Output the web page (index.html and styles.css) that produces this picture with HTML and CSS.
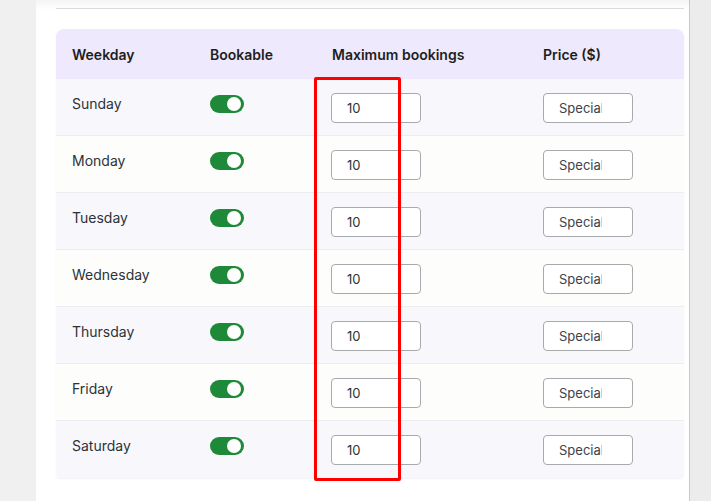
FILE: index.html
```html
<!DOCTYPE html>
<html>
<head>
<meta charset="utf-8">
<link rel="stylesheet" href="styles.css">
</head>
<body>
<div class="page">
  <div class="gutter"></div>
  <main class="panel">
    <div class="rule"></div>
    <div class="table-wrap">
      <div class="table">
        <div class="row head">
          <div class="cell">Weekday</div>
          <div class="cell">Bookable</div>
          <div class="cell">Maximum bookings</div>
          <div class="cell">Price ($)</div>
        </div>
        <div class="row odd">
          <div class="cell">Sunday</div>
          <div class="cell"><span class="toggle"><span class="knob"></span></span></div>
          <div class="cell"><input class="field" value="10"></div>
          <div class="cell"><input class="field price" value="Special"></div>
        </div>
        <div class="row even">
          <div class="cell">Monday</div>
          <div class="cell"><span class="toggle"><span class="knob"></span></span></div>
          <div class="cell"><input class="field" value="10"></div>
          <div class="cell"><input class="field price" value="Special"></div>
        </div>
        <div class="row odd">
          <div class="cell">Tuesday</div>
          <div class="cell"><span class="toggle"><span class="knob"></span></span></div>
          <div class="cell"><input class="field" value="10"></div>
          <div class="cell"><input class="field price" value="Special"></div>
        </div>
        <div class="row even">
          <div class="cell">Wednesday</div>
          <div class="cell"><span class="toggle"><span class="knob"></span></span></div>
          <div class="cell"><input class="field" value="10"></div>
          <div class="cell"><input class="field price" value="Special"></div>
        </div>
        <div class="row odd">
          <div class="cell">Thursday</div>
          <div class="cell"><span class="toggle"><span class="knob"></span></span></div>
          <div class="cell"><input class="field" value="10"></div>
          <div class="cell"><input class="field price" value="Special"></div>
        </div>
        <div class="row even">
          <div class="cell">Friday</div>
          <div class="cell"><span class="toggle"><span class="knob"></span></span></div>
          <div class="cell"><input class="field" value="10"></div>
          <div class="cell"><input class="field price" value="Special"></div>
        </div>
        <div class="row odd last">
          <div class="cell">Saturday</div>
          <div class="cell"><span class="toggle"><span class="knob"></span></span></div>
          <div class="cell"><input class="field" value="10"></div>
          <div class="cell"><input class="field price" value="Special"></div>
        </div>
      </div>
      <div class="highlight"></div>
    </div>
  </main>
  <div class="side"></div>
</div>
</body>
</html>
```
FILE: styles.css
```css
html, body {
  margin: 0;
  padding: 0;
  height: 100%;
}
body {
  font-family: Inter, "Noto Sans", "Liberation Sans", sans-serif;
  font-size: 14px;
  color: #2c3338;
  background: #f0f0f1;
  overflow: hidden;
}
.page {
  display: flex;
  height: 501px;
}
.gutter {
  width: 36px;
  flex: none;
  background: #f0f0f1;
}
.panel {
  width: 654px;
  flex: none;
  box-sizing: border-box;
  background: linear-gradient(#f4f4f4 0, #ffffff 10px);
  padding: 8px 5px 0 20px;
  border-right: 1px solid #c9c9c9;
}
.side {
  flex: 1;
  background: #ececec;
}
.rule {
  height: 1px;
  background: #dcdcde;
  margin-bottom: 20px;
}
.table-wrap {
  position: relative;
}
.table {
  border-radius: 8px 8px 4px 4px;
  overflow: hidden;
  box-shadow: 0 1px 2px rgba(0, 0, 0, 0.06);
}
.row {
  display: grid;
  grid-template-columns: 138px 122px 211px 1fr;
  height: 57px;
  border-bottom: 1px solid #ededf0;
  box-sizing: border-box;
}
.row.head {
  height: 50px;
  background: #eee9fd;
  border-bottom: none;
  align-items: center;
  padding-top: 2px;
  font-weight: 600;
  color: #1e1e1e;
}
.row.odd { background: #f8f8fc; }
.row.even { background: #fdfdfb; }
.row.last { border-bottom: none; }
.cell {
  padding-left: 16px;
  line-height: 20px;
}
.row:not(.head) .cell {
  padding-top: 14px;
}
.row:not(.head) .cell:first-child {
  padding-top: 15px;
}
.row:not(.head) .cell:nth-child(3) {
  padding-left: 15px;
}
.toggle {
  display: flex;
  justify-content: flex-end;
  align-items: center;
  width: 34px;
  height: 18px;
  border-radius: 9px;
  background: #1e8a39;
  box-sizing: border-box;
  padding-right: 3px;
  margin-top: 2px;
}
.knob {
  width: 14px;
  height: 14px;
  border-radius: 50%;
  background: #fff;
}
.field {
  display: block;
  width: 90px;
  height: 30px;
  box-sizing: border-box;
  border: 1px solid #a7aaad;
  border-radius: 4px;
  background: #fff;
  font-family: Inter, "Noto Sans", "Liberation Sans", sans-serif;
  font-size: 13px;
  color: #2c3338;
  padding: 0 10px 0 15px;
  margin: 0;
  outline: none;
}
.field.price {
  width: 90px;
  padding-right: 30px;
  color: #3c434a;
}
.highlight {
  position: absolute;
  left: 258px;
  top: 48px;
  width: 87px;
  height: 404px;
  box-sizing: border-box;
  border: 3px solid #ff0000;
  border-radius: 2px;
}
```
